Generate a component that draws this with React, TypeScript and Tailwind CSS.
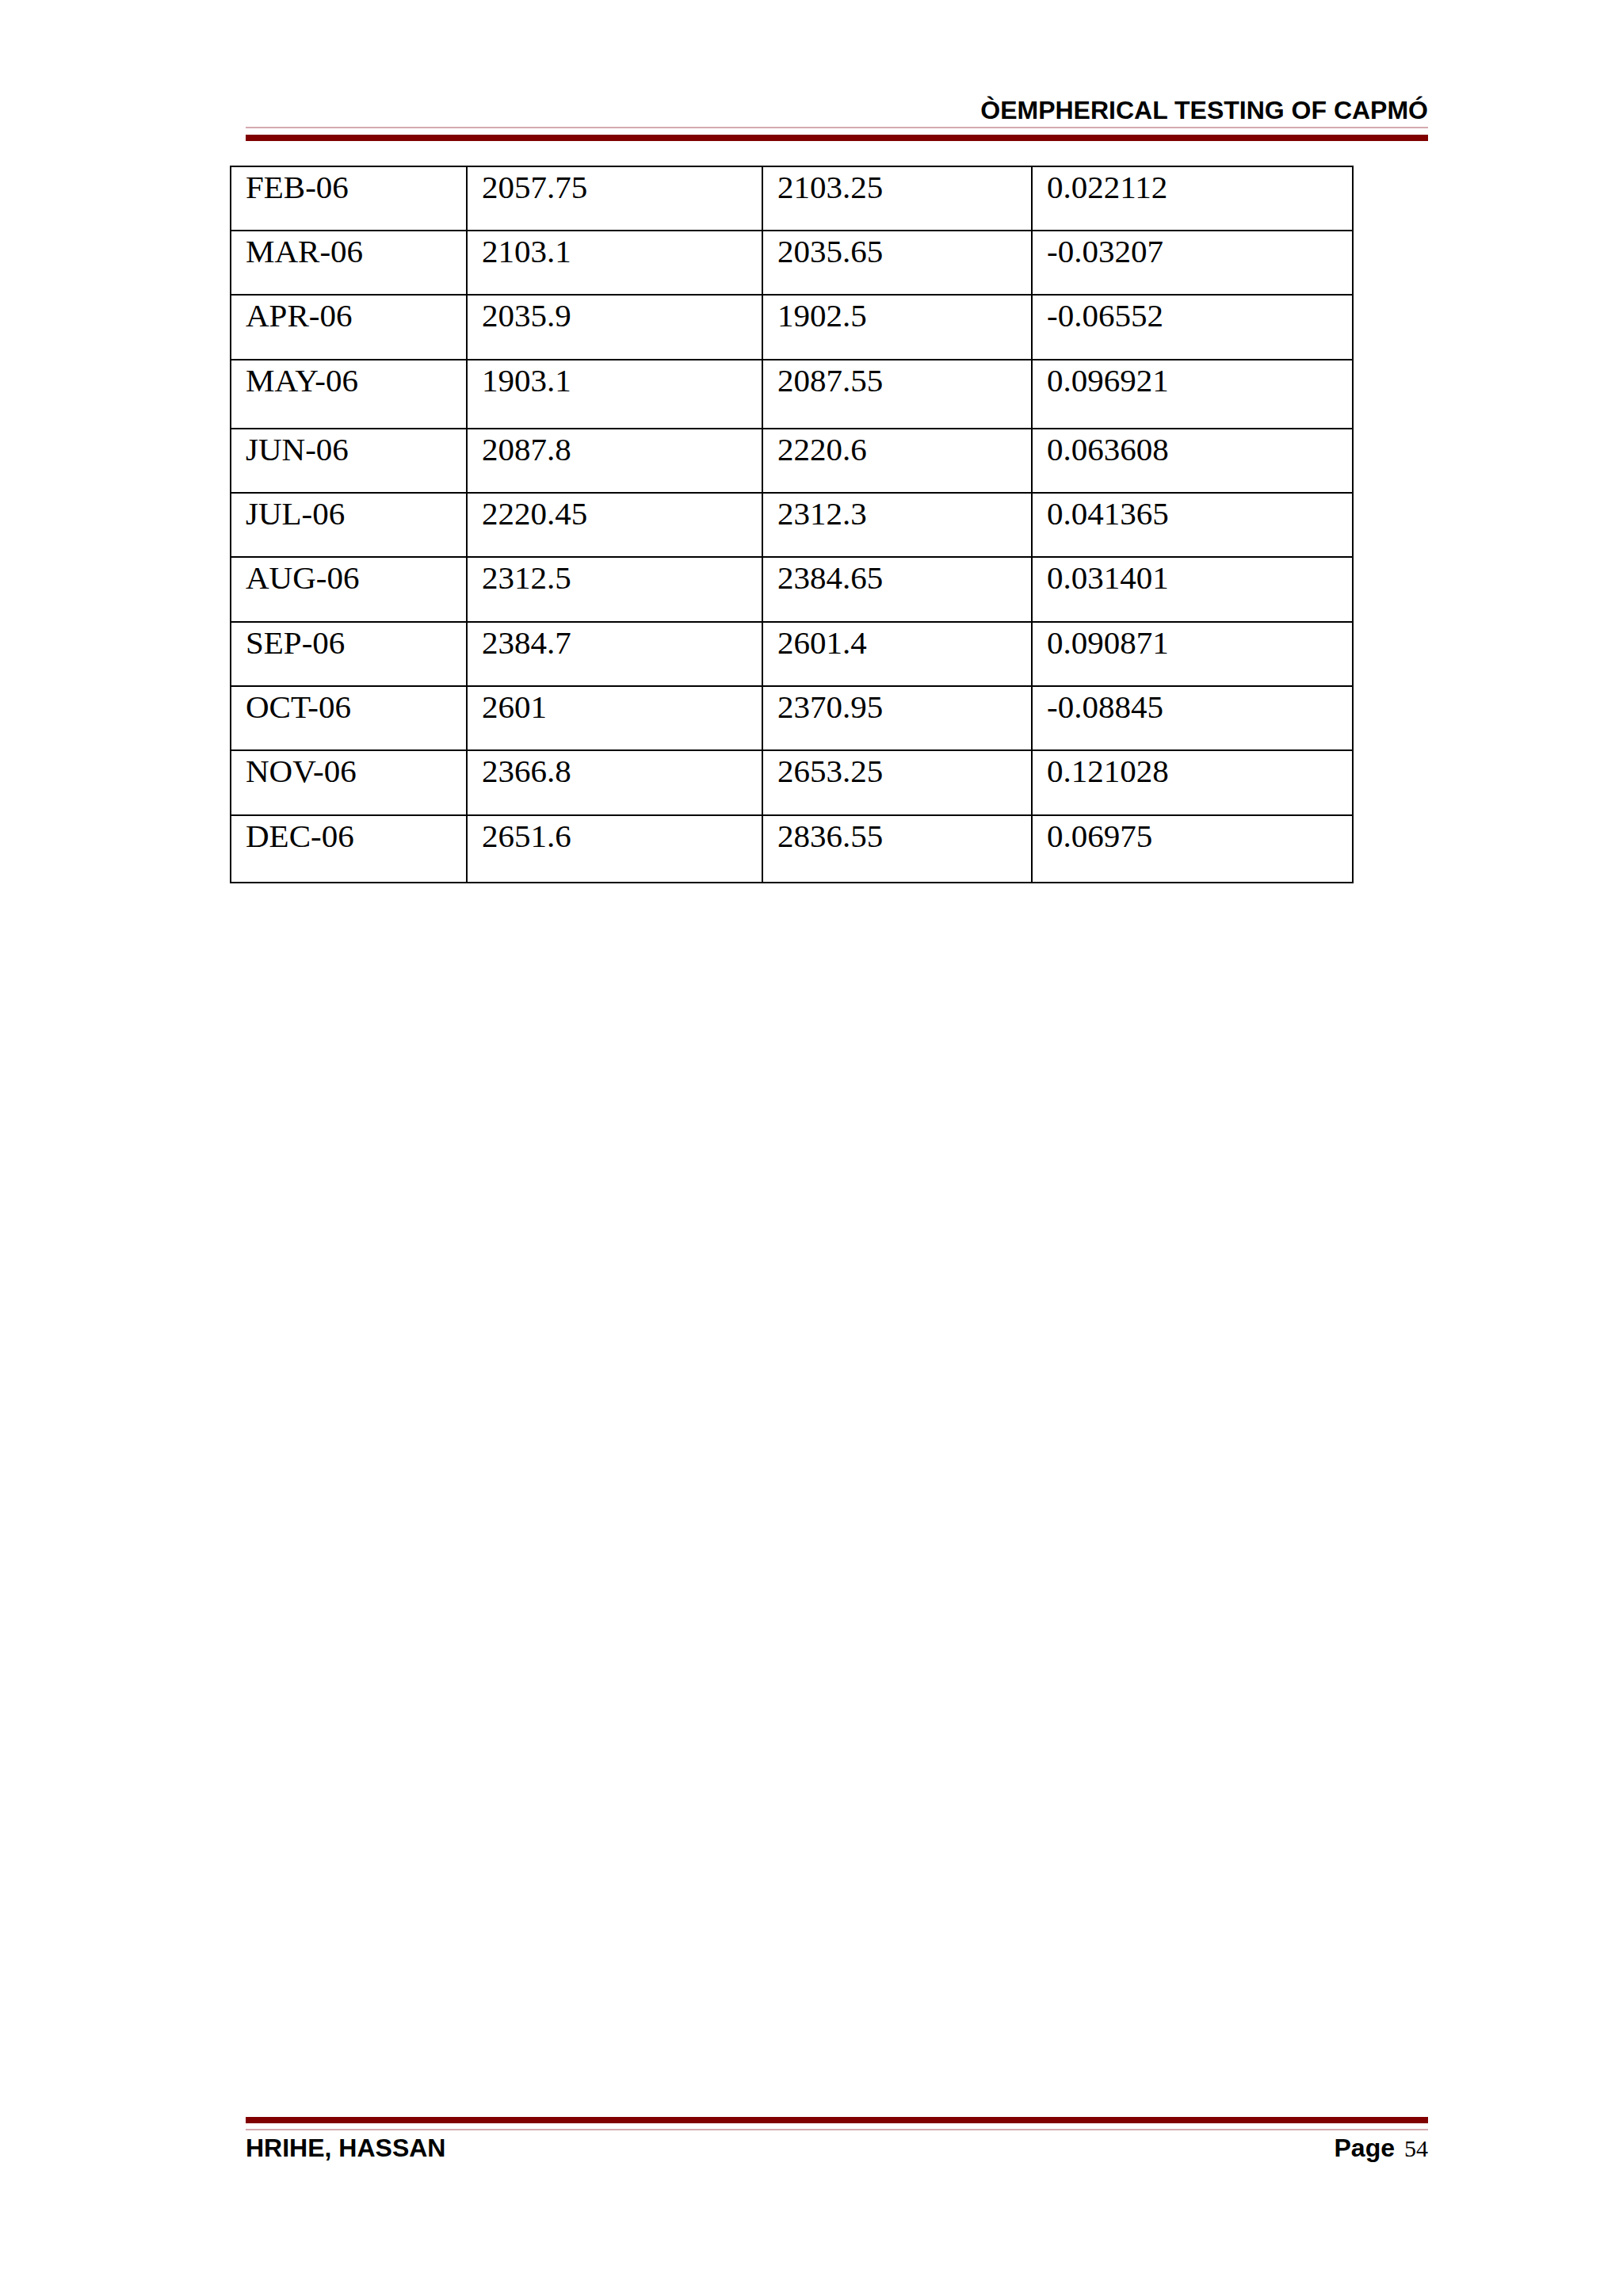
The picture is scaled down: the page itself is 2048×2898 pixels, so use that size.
const rows: [string, string, string, string, number][] = [
  ['FEB-06', '2057.75', '2103.25', '0.022112', 81],
  ['MAR-06', '2103.1', '2035.65', '-0.03207', 81],
  ['APR-06', '2035.9', '1902.5', '-0.06552', 82],
  ['MAY-06', '1903.1', '2087.55', '0.096921', 87],
  ['JUN-06', '2087.8', '2220.6', '0.063608', 81],
  ['JUL-06', '2220.45', '2312.3', '0.041365', 81],
  ['AUG-06', '2312.5', '2384.65', '0.031401', 82],
  ['SEP-06', '2384.7', '2601.4', '0.090871', 81],
  ['OCT-06', '2601', '2370.95', '-0.08845', 81],
  ['NOV-06', '2366.8', '2653.25', '0.121028', 82],
  ['DEC-06', '2651.6', '2836.55', '0.06975', 85],
];

const colWidths = ['w-[298px]', 'w-[373px]', 'w-[340px]', 'w-[405px]'];

export default function App() {
  return (
    <div className="w-[2048px] h-[2898px] bg-white flex flex-col text-black">
      {/* Header */}
      <div className="ml-[310px] w-[1492px] pt-[123px]">
        <div className="text-right text-[32px] leading-none font-bold font-['Liberation_Sans',Arial,sans-serif]">
          ÒEMPHERICAL TESTING OF CAPMÓ
        </div>
        <div className="mt-[5px] h-[2px] bg-[#d4aab0]" />
        <div className="mt-[8px] h-[8px] bg-[#800000]" />
      </div>

      {/* Table */}
      <div className="ml-[290px] mt-[31px] w-fit border-l-2 border-t-2 border-black font-['Liberation_Serif','Times_New_Roman',serif] text-[41px] leading-none">
        {rows.map(([month, open, close, ret, h]) => (
          <div key={month} className="flex" style={{ height: h }}>
            {[month, open, close, ret].map((v, i) => (
              <div
                key={i}
                className={`${colWidths[i]} border-r-2 border-b-2 border-black pl-[18px] pt-[5px]`}
              >
                {v}
              </div>
            ))}
          </div>
        ))}
      </div>

      <div className="flex-1" />

      {/* Footer */}
      <div className="ml-[310px] w-[1492px] pb-[171px]">
        <div className="h-[8px] bg-[#800000]" />
        <div className="mt-[7px] h-[2px] bg-[#d4aab0]" />
        <div className="mt-[6px] flex items-baseline justify-between leading-none">
          <span className="text-[32px] font-bold font-['Liberation_Sans',Arial,sans-serif]">
            HRIHE, HASSAN
          </span>
          <span className="flex items-baseline">
            <span className="text-[32px] font-bold font-['Liberation_Sans',Arial,sans-serif]">Page</span>
            <span className="ml-[12px] text-[30px] font-['Liberation_Serif','Times_New_Roman',serif]">54</span>
          </span>
        </div>
      </div>
    </div>
  );
}
